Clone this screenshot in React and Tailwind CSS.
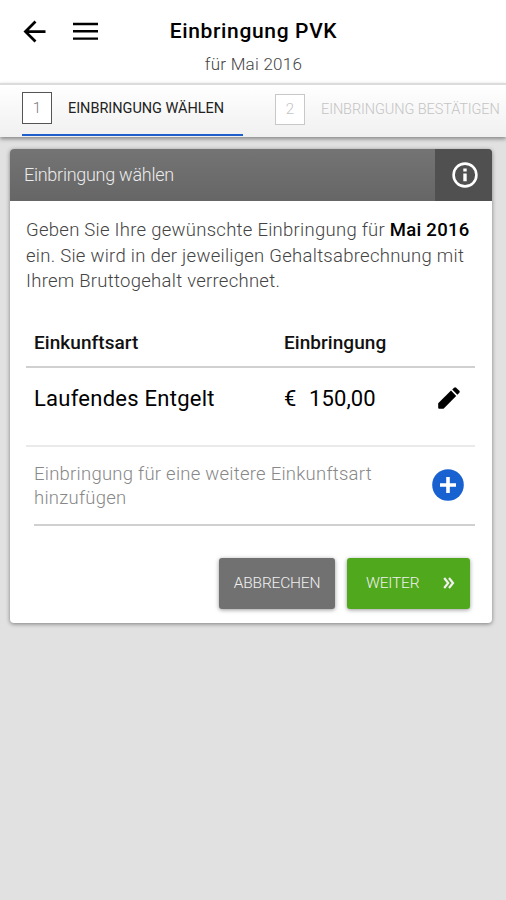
import React, { useState } from 'react';
import { MdArrowBack } from 'react-icons/md';

const steps = [
  { id: 1, label: 'EINBRINGUNG WÄHLEN' },
  { id: 2, label: 'EINBRINGUNG BESTÄTIGEN' }
];

const MenuIcon = () => (
  <svg viewBox="0 0 25 19" className="w-[25px] h-[19px]" stroke="currentColor" strokeWidth="2.4">
    <path d="M0 2h25M0 9.3h25M0 16.6h25" />
  </svg>
);

const InfoIcon = () => (
  <svg viewBox="0 0 26 26" className="w-[26px] h-[26px]" fill="none" stroke="currentColor">
    <circle cx="13" cy="13" r="11.4" strokeWidth="2.6" />
    <path d="M13 6.6v3M13 11.4v7.8" strokeWidth="3.4" />
  </svg>
);

const PencilIcon = () => (
  <svg viewBox="0 0 22 22" className="w-[22px] h-[22px]" fill="currentColor">
    <path d="M0.2 16.2v4.6q0 .9.9.9h4.4L18.2 9 13 3.6z" />
    <path d="M14.2 2.6l1.9-1.9q1-.9 2 0l3.2 3.1q.9 1 0 2l-1.9 1.9z" />
  </svg>
);

const AddIcon = () => (
  <svg viewBox="0 0 32 32" className="w-[32px] h-[32px]">
    <circle cx="16" cy="16" r="15.8" fill="#1861d0" />
    <path d="M16 8v16M8 16h16" stroke="#ffffff" strokeWidth="3.6" />
  </svg>
);

const Header = () => (
  <header className="h-[83px] bg-white grid grid-cols-[1fr_auto_1fr] pt-[15px]">
    <div className="flex items-start pl-[18px]">
      <button aria-label="Zurück">
        <MdArrowBack className="w-[33px] h-[33px]" />
      </button>
      <button aria-label="Menü" className="ml-[22px] mt-[7px]">
        <MenuIcon />
      </button>
    </div>
    <div className="text-center pl-[1px]">
      <h1 className="mt-[1px] text-[21px] leading-[30px] font-medium tracking-[0.65px] whitespace-nowrap">
        Einbringung PVK
      </h1>
      <p className="mt-[5px] text-[17px] leading-[26px] font-light tracking-[0.25px] text-[#444444]">
        für Mai 2016
      </p>
    </div>
  </header>
);

const StepTabs = ({ current, onSelect }) => (
  <nav className="relative h-[54px] pl-[22px] flex gap-[32px] border-t-2 border-[#dcdcdc] bg-linear-to-b from-white to-[#f0f0f0] shadow-[0_2px_4px_rgba(0,0,0,0.4)]">
    {steps.map((step) => {
      const active = step.id === current;
      return (
        <button
          key={step.id}
          onClick={() => onSelect(step.id)}
          className={`shrink-0 flex items-start text-left ${
            active
              ? 'w-[221px] h-[51px] pt-[7px] border-b-[2.5px] border-[#1f5fcb] text-[#222222]'
              : 'w-[231px] h-[51px] pt-[9px] text-[#c4c4c4]'
          }`}
        >
          <span
            className={`shrink-0 w-[30px] flex items-center justify-center border bg-white text-[15px] font-light ${
              active ? 'h-[32px] border-[#555555] text-[#777777]' : 'h-[31px] border-[#c8c8c8]'
            }`}
          >
            {step.id}
          </span>
          <span
            className={`ml-[16px] whitespace-nowrap text-[14.5px] ${
              active ? 'leading-[33px] font-normal tracking-[-0.03px]' : 'leading-[31px] font-light tracking-[-0.1px]'
            }`}
          >
            {step.label}
          </span>
        </button>
      );
    })}
  </nav>
);

const App = () => {
  const [step, setStep] = useState(1);

  return (
    <div className="h-[900px] w-[506px] overflow-hidden bg-[#e1e1e1] text-black font-['Roboto',sans-serif]">
      <Header />
      <StepTabs current={step} onSelect={setStep} />

      {/* Card */}
      <main className="mt-[12px] ml-[10px] w-[482px] h-[474px] bg-white rounded-[4px] shadow-[0_1px_4px_rgba(0,0,0,0.45)] overflow-hidden">
        <div className="h-[52px] flex text-white bg-linear-to-b from-[#747474] to-[#666666]">
          <h2 className="flex-1 pl-[14px] text-[18px] leading-[52px] font-light tracking-[-0.27px] text-[#ececec]">
            Einbringung wählen
          </h2>
          <button aria-label="Info" className="w-[57px] pl-[2px] flex items-center justify-center bg-[#505050]">
            <InfoIcon />
          </button>
        </div>

        <p className="pt-[17px] pl-[16px] text-[18.5px] leading-[25.5px] font-light tracking-[0.27px] text-[#444444] whitespace-nowrap">
          Geben Sie Ihre gewünschte Einbringung für{' '}
          <b className="font-medium text-black">Mai 2016</b>
          <br />
          ein. Sie wird in der jeweiligen Gehaltsabrechnung mit
          <br />
          Ihrem Bruttogehalt verrechnet.
        </p>

        <div className="ml-[16px] mr-[17px]">
          <div className="mt-[26px] h-[47px] pl-[8px] flex border-b-2 border-[#d0d0d0] text-[19px] leading-[44px] font-medium text-[#111111]">
            <span className="w-[250px] tracking-[0.05px]">Einkunftsart</span>
            <span className="tracking-[0.05px]">Einbringung</span>
          </div>

          <div className="h-[79px] pl-[8px] flex border-b-2 border-[#eaeaea] text-[22px] leading-[62px]">
            <span className="w-[250px] tracking-[0.25px]">Laufendes Entgelt</span>
            <span className="w-[25px]">€</span>
            <span className="flex-1 tracking-[0.1px]">150,00</span>
            <button aria-label="Bearbeiten" className="h-[61px] mr-[15px] flex items-center">
              <PencilIcon />
            </button>
          </div>

          <div className="h-[79px] ml-[8px] flex border-b-2 border-[#d0d0d0]">
            <p className="flex-1 pt-[15px] text-[18.5px] leading-[24px] font-light tracking-[0.25px] text-[#888888] whitespace-nowrap">
              Einbringung für eine weitere Einkunftsart
              <br />
              hinzufügen
            </p>
            <button aria-label="Hinzufügen" className="h-[77px] mr-[11px] flex items-center">
              <AddIcon />
            </button>
          </div>
        </div>

        <div className="mt-[32px] mr-[22px] flex justify-end gap-[12px] text-[15.5px] leading-[51px] font-light tracking-[-0.2px] text-[#f0f0f0]">
          <button className="w-[116px] h-[51px] rounded-[3px] bg-[#717171] shadow-[0_1px_4px_rgba(0,0,0,0.4)]">
            ABBRECHEN
          </button>
          <button className="w-[123px] h-[51px] pl-[19px] pr-[15px] flex items-center justify-between rounded-[3px] bg-[#50a81c] shadow-[0_1px_4px_rgba(0,0,0,0.4)]">
            WEITER
            <svg
              viewBox="0 0 12 12"
              className="w-[12px] h-[12px] mb-[1px]"
              fill="none"
              stroke="currentColor"
              strokeWidth="2.2"
            >
              <path d="M1.2 1l4 5-4 5M6 1l4 5-4 5" />
            </svg>
          </button>
        </div>
      </main>
    </div>
  );
};

export default App;
